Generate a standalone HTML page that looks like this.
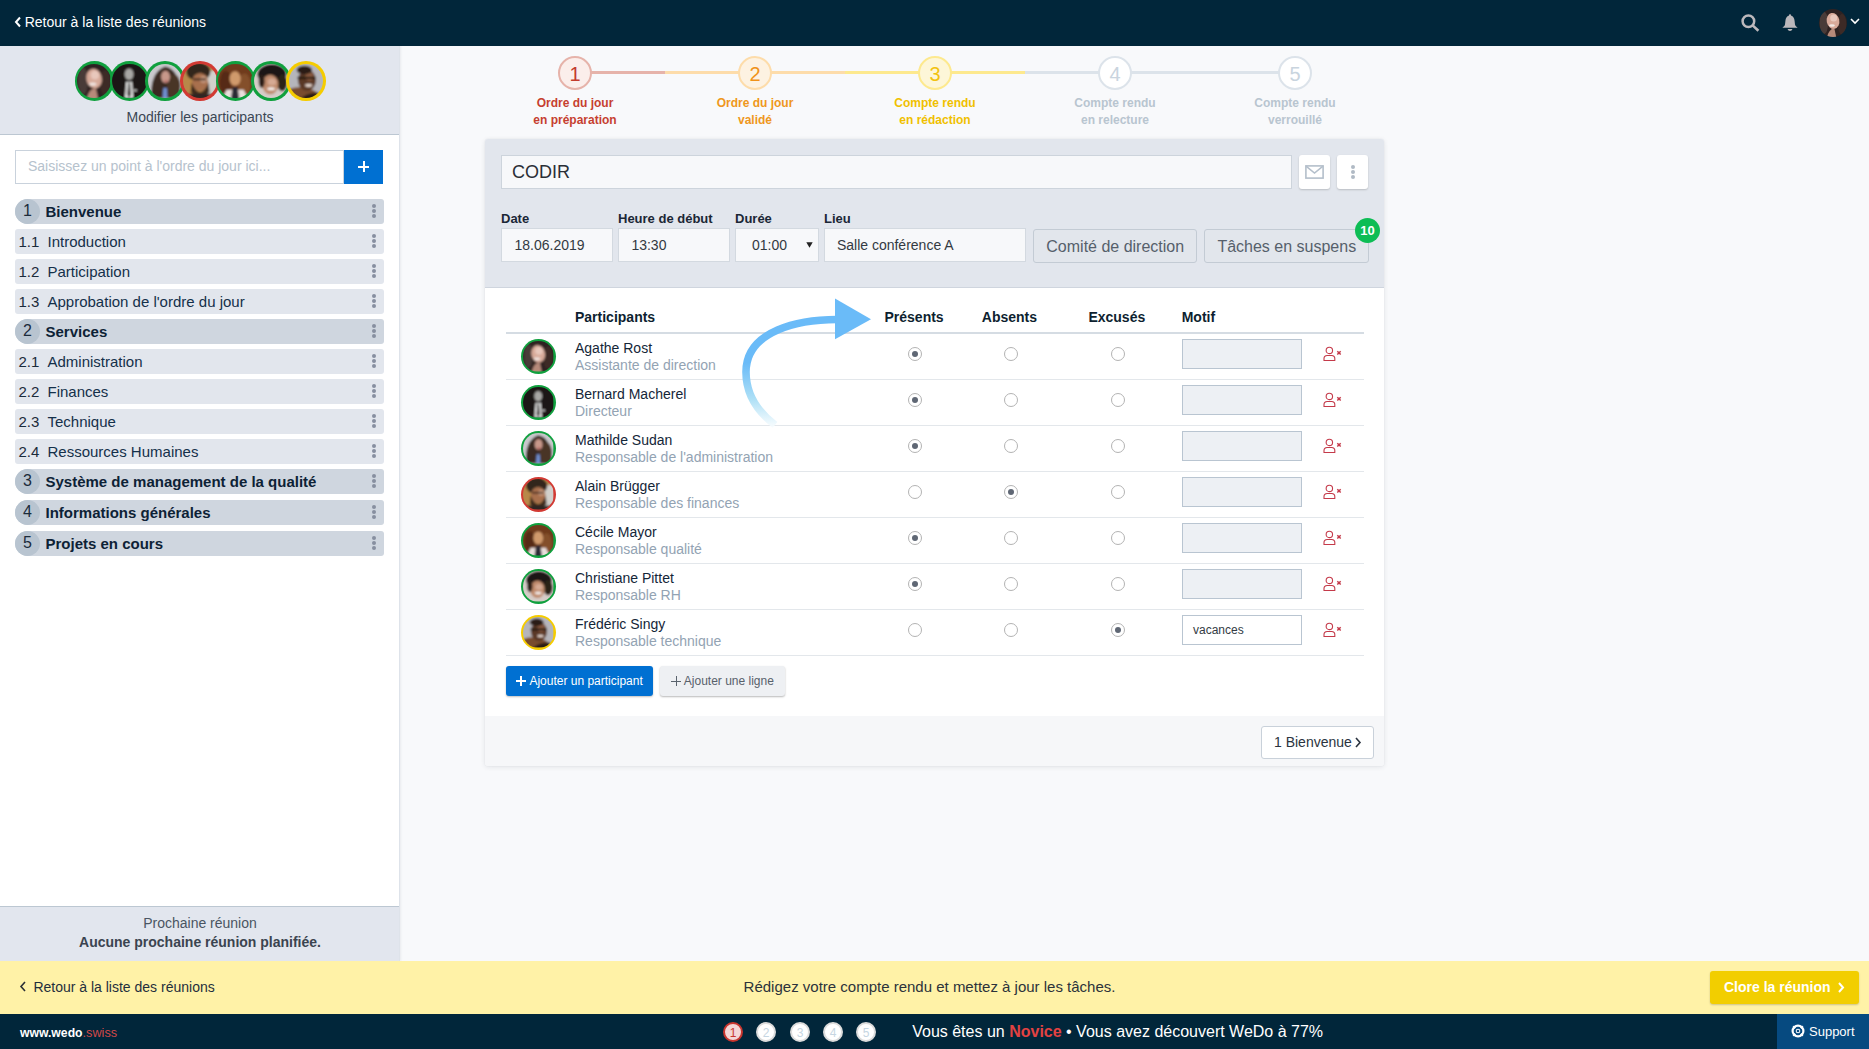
<!DOCTYPE html><html><head><meta charset="utf-8"><style>
html,body{margin:0;padding:0;width:1869px;height:1049px;overflow:hidden;background:#f8f9fb;font-family:"Liberation Sans",sans-serif;}
.t{position:absolute;white-space:pre;}
</style></head><body>
<svg width="0" height="0" style="position:absolute"><defs>
<symbol id="f1" viewBox="0 0 40 40"><g filter="url(#bl)"><rect x="-2" y="-2" width="44" height="44" fill="#2f2320"/><ellipse cx="7" cy="20" rx="6" ry="16" fill="#4a3b38"/><ellipse cx="33" cy="22" rx="6" ry="15" fill="#3c2c28"/><ellipse cx="20" cy="17" rx="9" ry="11.5" transform="rotate(-12 20 17)" fill="#d8aa9a"/><ellipse cx="21" cy="13" rx="5" ry="5" fill="#e8c8bc"/><path d="M11 42 Q14 28 22 28 L25 42Z" fill="#b78a7a"/><ellipse cx="18.5" cy="23.5" rx="4.2" ry="1.8" fill="#f2e8e4"/></g></symbol>
<symbol id="f2" viewBox="0 0 40 40"><g filter="url(#bl)"><rect x="-2" y="-2" width="44" height="44" fill="#1b1412"/><ellipse cx="20" cy="12" rx="5.2" ry="6.8" fill="#a9a7a5"/><path d="M15 40 L16.5 21 L23.5 21 L25 40Z" fill="#e6e6e6"/><path d="M19 22 L21 22 L22 36 L20 40 L18 36Z" fill="#262020"/><rect x="25" y="30" width="4" height="1.6" fill="#ddd"/></g></symbol>
<symbol id="f3" viewBox="0 0 40 40"><g filter="url(#bl)"><rect x="-2" y="-2" width="44" height="44" fill="#c9c8cc"/><path d="M4 40 Q2 10 20 3 Q38 6 38 40Z" fill="#3b2a23"/><ellipse cx="30" cy="26" rx="8" ry="14" fill="#4a3428"/><ellipse cx="20.5" cy="15" rx="5.2" ry="7.2" fill="#c8988a"/><ellipse cx="21" cy="20" rx="1.8" ry="0.8" fill="#b03040"/><path d="M17 40 L18 28 L22 28 L23 40Z" fill="#6f8fd0"/></g></symbol>
<symbol id="f4" viewBox="0 0 40 40"><g filter="url(#bl)"><rect x="-2" y="-2" width="44" height="44" fill="#b88848"/><rect x="27" y="8" width="15" height="34" fill="#d2d0cc"/><ellipse cx="18" cy="9" rx="14" ry="11" fill="#33251c"/><ellipse cx="20" cy="21" rx="9.5" ry="10.5" fill="#a8704e"/><ellipse cx="24" cy="18" rx="4" ry="4" fill="#c89a80"/><rect x="12" y="17" width="15" height="2" fill="#2a1a12"/><path d="M10 22 Q20 44 30 22 L31 33 Q20 44 9 33Z" fill="#3e2a1e"/><rect x="-2" y="35" width="44" height="8" fill="#2e2620"/></g></symbol>
<symbol id="f5" viewBox="0 0 40 40"><g filter="url(#bl)"><rect x="-2" y="-2" width="44" height="44" fill="#6f3b1d"/><ellipse cx="9" cy="22" rx="7" ry="14" fill="#562c14"/><ellipse cx="31" cy="24" rx="7" ry="13" fill="#84502c"/><ellipse cx="20" cy="17" rx="6.5" ry="8.5" fill="#d09a6c"/><path d="M4 42 L10 30 L30 30 L36 42Z" fill="#e9dfdc"/><path d="M15 42 L17 27 L23 27 L25 42Z" fill="#2b2934"/></g></symbol>
<symbol id="f6" viewBox="0 0 40 40"><g filter="url(#bl)"><rect x="-2" y="-2" width="44" height="44" fill="#d6ccc8"/><ellipse cx="21" cy="12" rx="17" ry="12" fill="#1e1612"/><ellipse cx="33" cy="22" rx="6" ry="10" fill="#2c2018"/><ellipse cx="19" cy="24" rx="9.5" ry="11.5" fill="#bf8a6c"/><ellipse cx="21" cy="21" rx="5" ry="4" fill="#d6aa94"/><ellipse cx="20" cy="29" rx="4.5" ry="1.8" fill="#f6f0ee"/><ellipse cx="9" cy="20" rx="3.5" ry="8" fill="#2a1e18"/></g></symbol>
<symbol id="f7" viewBox="0 0 40 40"><g filter="url(#bl)"><rect x="-2" y="-2" width="44" height="44" fill="#b5b5bb"/><path d="M-2 42 L-2 30 Q18 22 34 34 L38 42Z" fill="#784c2e"/><path d="M12 42 Q22 32 36 34 L40 42Z" fill="#2a1c16"/><ellipse cx="21" cy="19" rx="10.5" ry="12.5" fill="#5a3826"/><ellipse cx="24" cy="15" rx="5" ry="5" fill="#8a5a40"/><ellipse cx="18" cy="7" rx="9" ry="5" fill="#2a1a14"/><rect x="10" y="15" width="21" height="2.6" fill="#1a1210"/><ellipse cx="23" cy="25" rx="4.2" ry="1.8" fill="#e4d4cc"/></g></symbol>
<filter id="bl" x="-10%" y="-10%" width="120%" height="120%"><feGaussianBlur stdDeviation="1.1"/></filter></defs></svg>
<div style="position:absolute;left:0px;top:0px;width:1869px;height:46px;box-sizing:border-box;background:#01263a;"></div>
<svg style="position:absolute;left:14px;top:16px" width="8" height="12" viewBox="0 0 8 12"><path d="M6 1.5 L2 6 L6 10.5" stroke="#fff" stroke-width="2" fill="none"/></svg>
<div class="t" style="left:24.7px;top:15.15px;font-size:14px;line-height:14px;font-weight:400;color:#ffffff;">Retour à la liste des réunions</div>
<svg style="position:absolute;left:1740px;top:13px" width="20" height="20" viewBox="0 0 20 20"><circle cx="8.4" cy="8.2" r="5.8" stroke="#bcb8bc" stroke-width="2.5" fill="none"/><path d="M12.6 12.4 L18.4 17.8" stroke="#bcb8bc" stroke-width="2.6"/></svg>
<svg style="position:absolute;left:1782px;top:13px" width="16" height="19" viewBox="0 0 16 19"><path d="M8 1.2 C8.6 1.2 9 1.8 9 2.4 C11.2 3 12.4 5 12.6 8 L13 11.5 C13.2 12.8 14.6 13.8 15.6 14.8 L0.4 14.8 C1.4 13.8 2.8 12.8 3 11.5 L3.4 8 C3.6 5 4.8 3 7 2.4 C7 1.8 7.4 1.2 8 1.2Z" fill="#bbb7bb"/><path d="M5.5 16 L10.5 16 Q9.8 18 8 18 Q6.2 18 5.5 16Z" fill="#bbb7bb"/></svg>
<div style="position:absolute;left:1819.00px;top:9.00px;width:28px;height:28px;border-radius:50%;background:#01263a;z-index:1;"><svg style="position:absolute;left:0px;top:0px;border-radius:50%" width="28" height="28" viewBox="0 0 40 40"><use href="#f1"/></svg></div>
<svg style="position:absolute;left:1850px;top:18px" width="10" height="7" viewBox="0 0 10 7"><path d="M1 1 L5 5 L9 1" stroke="#fff" stroke-width="1.6" fill="none"/></svg>
<div style="position:absolute;left:0px;top:46px;width:400px;height:915px;box-sizing:border-box;background:#ffffff;border-right:1px solid #dee3ea;box-shadow:1px 0 2px rgba(40,50,70,0.07);"></div>
<div style="position:absolute;left:0px;top:46px;width:399px;height:89px;box-sizing:border-box;background:#e2e6ee;border-bottom:1px solid #bcc7d2;"></div>
<div style="position:absolute;left:74.50px;top:61.20px;width:39.6px;height:39.6px;border-radius:50%;background:#10a03e;z-index:1;"><svg style="position:absolute;left:2.7px;top:2.7px;border-radius:50%" width="34.2" height="34.2" viewBox="0 0 40 40"><use href="#f1"/></svg></div>
<div style="position:absolute;left:109.80px;top:61.20px;width:39.6px;height:39.6px;border-radius:50%;background:#10a03e;z-index:2;"><svg style="position:absolute;left:2.7px;top:2.7px;border-radius:50%" width="34.2" height="34.2" viewBox="0 0 40 40"><use href="#f2"/></svg></div>
<div style="position:absolute;left:145.10px;top:61.20px;width:39.6px;height:39.6px;border-radius:50%;background:#10a03e;z-index:3;"><svg style="position:absolute;left:2.7px;top:2.7px;border-radius:50%" width="34.2" height="34.2" viewBox="0 0 40 40"><use href="#f3"/></svg></div>
<div style="position:absolute;left:180.40px;top:61.20px;width:39.6px;height:39.6px;border-radius:50%;background:#d23a33;z-index:4;"><svg style="position:absolute;left:2.7px;top:2.7px;border-radius:50%" width="34.2" height="34.2" viewBox="0 0 40 40"><use href="#f4"/></svg></div>
<div style="position:absolute;left:215.70px;top:61.20px;width:39.6px;height:39.6px;border-radius:50%;background:#10a03e;z-index:5;"><svg style="position:absolute;left:2.7px;top:2.7px;border-radius:50%" width="34.2" height="34.2" viewBox="0 0 40 40"><use href="#f5"/></svg></div>
<div style="position:absolute;left:251.00px;top:61.20px;width:39.6px;height:39.6px;border-radius:50%;background:#10a03e;z-index:6;"><svg style="position:absolute;left:2.7px;top:2.7px;border-radius:50%" width="34.2" height="34.2" viewBox="0 0 40 40"><use href="#f6"/></svg></div>
<div style="position:absolute;left:286.30px;top:61.20px;width:39.6px;height:39.6px;border-radius:50%;background:#f5cc00;z-index:7;"><svg style="position:absolute;left:2.7px;top:2.7px;border-radius:50%" width="34.2" height="34.2" viewBox="0 0 40 40"><use href="#f7"/></svg></div>
<div class="t" style="left:-100px;width:600px;text-align:center;top:110.15px;font-size:14px;line-height:14px;font-weight:400;color:#3b4754;">Modifier les participants</div>
<div style="position:absolute;left:15px;top:150px;width:329px;height:34px;box-sizing:border-box;background:#fff;border:1px solid #c9d2dc;"></div>
<div class="t" style="left:28px;top:159.15px;font-size:14px;line-height:14px;font-weight:400;color:#b6c2cd;">Saisissez un point à l'ordre du jour ici...</div>
<div style="position:absolute;left:344px;top:150px;width:39px;height:34px;box-sizing:border-box;background:#0070d2;"></div>
<div style="position:absolute;left:358px;top:161px;width:11px;height:11px;"><div style="position:absolute;left:4.5px;top:0;width:2px;height:11px;background:#fff"></div><div style="position:absolute;left:0;top:4.5px;width:11px;height:2px;background:#fff"></div></div>
<div style="position:absolute;left:15px;top:199px;width:369px;height:25px;box-sizing:border-box;background:#cfd6df;border-radius:3px 3px 3px 3px;border-top-left-radius:12.5px;border-bottom-left-radius:12.5px;"></div>
<div style="position:absolute;left:15px;top:199px;width:25px;height:25px;box-sizing:border-box;background:#b8c4d0;border-radius:50%;"></div>
<div class="t" style="left:-272.5px;width:600px;text-align:center;top:203.26px;font-size:16px;line-height:16px;font-weight:400;color:#1b2b3b;">1</div>
<div class="t" style="left:45.5px;top:204.30px;font-size:15px;line-height:15px;font-weight:700;color:#0d2236;">Bienvenue</div>
<div style="position:absolute;left:372px;top:204px;width:4px;height:4px;box-sizing:border-box;background:#878fa0;border-radius:50%;"></div>
<div style="position:absolute;left:372px;top:209px;width:4px;height:4px;box-sizing:border-box;background:#878fa0;border-radius:50%;"></div>
<div style="position:absolute;left:372px;top:214px;width:4px;height:4px;box-sizing:border-box;background:#878fa0;border-radius:50%;"></div>
<div style="position:absolute;left:15px;top:229px;width:369px;height:25px;box-sizing:border-box;background:#e2e6ed;border-radius:3px;"></div>
<div class="t" style="left:18.5px;top:234.30px;font-size:15px;line-height:15px;font-weight:400;color:#1b2b3b;">1.1</div>
<div class="t" style="left:47.5px;top:234.30px;font-size:15px;line-height:15px;font-weight:400;color:#14304a;">Introduction</div>
<div style="position:absolute;left:372px;top:234px;width:4px;height:4px;box-sizing:border-box;background:#878fa0;border-radius:50%;"></div>
<div style="position:absolute;left:372px;top:239px;width:4px;height:4px;box-sizing:border-box;background:#878fa0;border-radius:50%;"></div>
<div style="position:absolute;left:372px;top:244px;width:4px;height:4px;box-sizing:border-box;background:#878fa0;border-radius:50%;"></div>
<div style="position:absolute;left:15px;top:259px;width:369px;height:25px;box-sizing:border-box;background:#e2e6ed;border-radius:3px;"></div>
<div class="t" style="left:18.5px;top:264.30px;font-size:15px;line-height:15px;font-weight:400;color:#1b2b3b;">1.2</div>
<div class="t" style="left:47.5px;top:264.30px;font-size:15px;line-height:15px;font-weight:400;color:#14304a;">Participation</div>
<div style="position:absolute;left:372px;top:264px;width:4px;height:4px;box-sizing:border-box;background:#878fa0;border-radius:50%;"></div>
<div style="position:absolute;left:372px;top:269px;width:4px;height:4px;box-sizing:border-box;background:#878fa0;border-radius:50%;"></div>
<div style="position:absolute;left:372px;top:274px;width:4px;height:4px;box-sizing:border-box;background:#878fa0;border-radius:50%;"></div>
<div style="position:absolute;left:15px;top:289px;width:369px;height:25px;box-sizing:border-box;background:#e2e6ed;border-radius:3px;"></div>
<div class="t" style="left:18.5px;top:294.30px;font-size:15px;line-height:15px;font-weight:400;color:#1b2b3b;">1.3</div>
<div class="t" style="left:47.5px;top:294.30px;font-size:15px;line-height:15px;font-weight:400;color:#14304a;">Approbation de l'ordre du jour</div>
<div style="position:absolute;left:372px;top:294px;width:4px;height:4px;box-sizing:border-box;background:#878fa0;border-radius:50%;"></div>
<div style="position:absolute;left:372px;top:299px;width:4px;height:4px;box-sizing:border-box;background:#878fa0;border-radius:50%;"></div>
<div style="position:absolute;left:372px;top:304px;width:4px;height:4px;box-sizing:border-box;background:#878fa0;border-radius:50%;"></div>
<div style="position:absolute;left:15px;top:319px;width:369px;height:25px;box-sizing:border-box;background:#cfd6df;border-radius:3px 3px 3px 3px;border-top-left-radius:12.5px;border-bottom-left-radius:12.5px;"></div>
<div style="position:absolute;left:15px;top:319px;width:25px;height:25px;box-sizing:border-box;background:#b8c4d0;border-radius:50%;"></div>
<div class="t" style="left:-272.5px;width:600px;text-align:center;top:323.26px;font-size:16px;line-height:16px;font-weight:400;color:#1b2b3b;">2</div>
<div class="t" style="left:45.5px;top:324.30px;font-size:15px;line-height:15px;font-weight:700;color:#0d2236;">Services</div>
<div style="position:absolute;left:372px;top:324px;width:4px;height:4px;box-sizing:border-box;background:#878fa0;border-radius:50%;"></div>
<div style="position:absolute;left:372px;top:329px;width:4px;height:4px;box-sizing:border-box;background:#878fa0;border-radius:50%;"></div>
<div style="position:absolute;left:372px;top:334px;width:4px;height:4px;box-sizing:border-box;background:#878fa0;border-radius:50%;"></div>
<div style="position:absolute;left:15px;top:349px;width:369px;height:25px;box-sizing:border-box;background:#e2e6ed;border-radius:3px;"></div>
<div class="t" style="left:18.5px;top:354.30px;font-size:15px;line-height:15px;font-weight:400;color:#1b2b3b;">2.1</div>
<div class="t" style="left:47.5px;top:354.30px;font-size:15px;line-height:15px;font-weight:400;color:#14304a;">Administration</div>
<div style="position:absolute;left:372px;top:354px;width:4px;height:4px;box-sizing:border-box;background:#878fa0;border-radius:50%;"></div>
<div style="position:absolute;left:372px;top:359px;width:4px;height:4px;box-sizing:border-box;background:#878fa0;border-radius:50%;"></div>
<div style="position:absolute;left:372px;top:364px;width:4px;height:4px;box-sizing:border-box;background:#878fa0;border-radius:50%;"></div>
<div style="position:absolute;left:15px;top:379px;width:369px;height:25px;box-sizing:border-box;background:#e2e6ed;border-radius:3px;"></div>
<div class="t" style="left:18.5px;top:384.30px;font-size:15px;line-height:15px;font-weight:400;color:#1b2b3b;">2.2</div>
<div class="t" style="left:47.5px;top:384.30px;font-size:15px;line-height:15px;font-weight:400;color:#14304a;">Finances</div>
<div style="position:absolute;left:372px;top:384px;width:4px;height:4px;box-sizing:border-box;background:#878fa0;border-radius:50%;"></div>
<div style="position:absolute;left:372px;top:389px;width:4px;height:4px;box-sizing:border-box;background:#878fa0;border-radius:50%;"></div>
<div style="position:absolute;left:372px;top:394px;width:4px;height:4px;box-sizing:border-box;background:#878fa0;border-radius:50%;"></div>
<div style="position:absolute;left:15px;top:409px;width:369px;height:25px;box-sizing:border-box;background:#e2e6ed;border-radius:3px;"></div>
<div class="t" style="left:18.5px;top:414.30px;font-size:15px;line-height:15px;font-weight:400;color:#1b2b3b;">2.3</div>
<div class="t" style="left:47.5px;top:414.30px;font-size:15px;line-height:15px;font-weight:400;color:#14304a;">Technique</div>
<div style="position:absolute;left:372px;top:414px;width:4px;height:4px;box-sizing:border-box;background:#878fa0;border-radius:50%;"></div>
<div style="position:absolute;left:372px;top:419px;width:4px;height:4px;box-sizing:border-box;background:#878fa0;border-radius:50%;"></div>
<div style="position:absolute;left:372px;top:424px;width:4px;height:4px;box-sizing:border-box;background:#878fa0;border-radius:50%;"></div>
<div style="position:absolute;left:15px;top:439px;width:369px;height:25px;box-sizing:border-box;background:#e2e6ed;border-radius:3px;"></div>
<div class="t" style="left:18.5px;top:444.30px;font-size:15px;line-height:15px;font-weight:400;color:#1b2b3b;">2.4</div>
<div class="t" style="left:47.5px;top:444.30px;font-size:15px;line-height:15px;font-weight:400;color:#14304a;">Ressources Humaines</div>
<div style="position:absolute;left:372px;top:444px;width:4px;height:4px;box-sizing:border-box;background:#878fa0;border-radius:50%;"></div>
<div style="position:absolute;left:372px;top:449px;width:4px;height:4px;box-sizing:border-box;background:#878fa0;border-radius:50%;"></div>
<div style="position:absolute;left:372px;top:454px;width:4px;height:4px;box-sizing:border-box;background:#878fa0;border-radius:50%;"></div>
<div style="position:absolute;left:15px;top:469px;width:369px;height:25px;box-sizing:border-box;background:#cfd6df;border-radius:3px 3px 3px 3px;border-top-left-radius:12.5px;border-bottom-left-radius:12.5px;"></div>
<div style="position:absolute;left:15px;top:469px;width:25px;height:25px;box-sizing:border-box;background:#b8c4d0;border-radius:50%;"></div>
<div class="t" style="left:-272.5px;width:600px;text-align:center;top:473.26px;font-size:16px;line-height:16px;font-weight:400;color:#1b2b3b;">3</div>
<div class="t" style="left:45.5px;top:474.30px;font-size:15px;line-height:15px;font-weight:700;color:#0d2236;">Système de management de la qualité</div>
<div style="position:absolute;left:372px;top:474px;width:4px;height:4px;box-sizing:border-box;background:#878fa0;border-radius:50%;"></div>
<div style="position:absolute;left:372px;top:479px;width:4px;height:4px;box-sizing:border-box;background:#878fa0;border-radius:50%;"></div>
<div style="position:absolute;left:372px;top:484px;width:4px;height:4px;box-sizing:border-box;background:#878fa0;border-radius:50%;"></div>
<div style="position:absolute;left:15px;top:500px;width:369px;height:25px;box-sizing:border-box;background:#cfd6df;border-radius:3px 3px 3px 3px;border-top-left-radius:12.5px;border-bottom-left-radius:12.5px;"></div>
<div style="position:absolute;left:15px;top:500px;width:25px;height:25px;box-sizing:border-box;background:#b8c4d0;border-radius:50%;"></div>
<div class="t" style="left:-272.5px;width:600px;text-align:center;top:504.26px;font-size:16px;line-height:16px;font-weight:400;color:#1b2b3b;">4</div>
<div class="t" style="left:45.5px;top:505.30px;font-size:15px;line-height:15px;font-weight:700;color:#0d2236;">Informations générales</div>
<div style="position:absolute;left:372px;top:505px;width:4px;height:4px;box-sizing:border-box;background:#878fa0;border-radius:50%;"></div>
<div style="position:absolute;left:372px;top:510px;width:4px;height:4px;box-sizing:border-box;background:#878fa0;border-radius:50%;"></div>
<div style="position:absolute;left:372px;top:515px;width:4px;height:4px;box-sizing:border-box;background:#878fa0;border-radius:50%;"></div>
<div style="position:absolute;left:15px;top:531px;width:369px;height:25px;box-sizing:border-box;background:#cfd6df;border-radius:3px 3px 3px 3px;border-top-left-radius:12.5px;border-bottom-left-radius:12.5px;"></div>
<div style="position:absolute;left:15px;top:531px;width:25px;height:25px;box-sizing:border-box;background:#b8c4d0;border-radius:50%;"></div>
<div class="t" style="left:-272.5px;width:600px;text-align:center;top:535.26px;font-size:16px;line-height:16px;font-weight:400;color:#1b2b3b;">5</div>
<div class="t" style="left:45.5px;top:536.30px;font-size:15px;line-height:15px;font-weight:700;color:#0d2236;">Projets en cours</div>
<div style="position:absolute;left:372px;top:536px;width:4px;height:4px;box-sizing:border-box;background:#878fa0;border-radius:50%;"></div>
<div style="position:absolute;left:372px;top:541px;width:4px;height:4px;box-sizing:border-box;background:#878fa0;border-radius:50%;"></div>
<div style="position:absolute;left:372px;top:546px;width:4px;height:4px;box-sizing:border-box;background:#878fa0;border-radius:50%;"></div>
<div style="position:absolute;left:0px;top:906px;width:399px;height:55px;box-sizing:border-box;background:#e2e6ee;border-top:1px solid #bcc7d2;"></div>
<div class="t" style="left:-100px;width:600px;text-align:center;top:916.35px;font-size:14px;line-height:14px;font-weight:400;color:#4a5562;">Prochaine réunion</div>
<div class="t" style="left:-100px;width:600px;text-align:center;top:935.15px;font-size:14px;line-height:14px;font-weight:700;color:#3b4450;">Aucune prochaine réunion planifiée.</div>
<div style="position:absolute;left:575px;top:71px;width:90px;height:3px;box-sizing:border-box;background:#e6b3aa;"></div>
<div style="position:absolute;left:665px;top:71px;width:180px;height:3px;box-sizing:border-box;background:#fddcaa;"></div>
<div style="position:absolute;left:845px;top:71px;width:180px;height:3px;box-sizing:border-box;background:#fde98e;"></div>
<div style="position:absolute;left:1025px;top:71px;width:180px;height:3px;box-sizing:border-box;background:#dce3ea;"></div>
<div style="position:absolute;left:1205px;top:71px;width:90px;height:3px;box-sizing:border-box;background:#dce3ea;"></div>
<div style="position:absolute;left:558px;top:56px;width:34px;height:34px;box-sizing:border-box;border-radius:50%;border:2px solid #e6b3aa;background:#fbeeeb;"></div>
<div class="t" style="left:275px;width:600px;text-align:center;top:64.07px;font-size:20px;line-height:20px;font-weight:400;color:#c33b2d;">1</div>
<div class="t" style="left:275px;width:600px;text-align:center;top:96.64px;font-size:12px;line-height:12px;font-weight:700;color:#c63f30;">Ordre du jour</div>
<div class="t" style="left:275px;width:600px;text-align:center;top:114.14px;font-size:12px;line-height:12px;font-weight:700;color:#c63f30;">en préparation</div>
<div style="position:absolute;left:738px;top:56px;width:34px;height:34px;box-sizing:border-box;border-radius:50%;border:2px solid #fddcaa;background:#fdf2e2;"></div>
<div class="t" style="left:455px;width:600px;text-align:center;top:64.07px;font-size:20px;line-height:20px;font-weight:400;color:#f0921a;">2</div>
<div class="t" style="left:455px;width:600px;text-align:center;top:96.64px;font-size:12px;line-height:12px;font-weight:700;color:#ef9720;">Ordre du jour</div>
<div class="t" style="left:455px;width:600px;text-align:center;top:114.14px;font-size:12px;line-height:12px;font-weight:700;color:#ef9720;">validé</div>
<div style="position:absolute;left:918px;top:56px;width:34px;height:34px;box-sizing:border-box;border-radius:50%;border:2px solid #fde98e;background:#fdf6d8;"></div>
<div class="t" style="left:635px;width:600px;text-align:center;top:64.07px;font-size:20px;line-height:20px;font-weight:400;color:#f2c20f;">3</div>
<div class="t" style="left:635px;width:600px;text-align:center;top:96.64px;font-size:12px;line-height:12px;font-weight:700;color:#f0c000;">Compte rendu</div>
<div class="t" style="left:635px;width:600px;text-align:center;top:114.14px;font-size:12px;line-height:12px;font-weight:700;color:#f0c000;">en rédaction</div>
<div style="position:absolute;left:1098px;top:56px;width:34px;height:34px;box-sizing:border-box;border-radius:50%;border:2px solid #dce3ea;background:#ffffff;"></div>
<div class="t" style="left:815px;width:600px;text-align:center;top:64.07px;font-size:20px;line-height:20px;font-weight:400;color:#c9d4de;">4</div>
<div class="t" style="left:815px;width:600px;text-align:center;top:96.64px;font-size:12px;line-height:12px;font-weight:700;color:#b8c5d0;">Compte rendu</div>
<div class="t" style="left:815px;width:600px;text-align:center;top:114.14px;font-size:12px;line-height:12px;font-weight:700;color:#b8c5d0;">en relecture</div>
<div style="position:absolute;left:1278px;top:56px;width:34px;height:34px;box-sizing:border-box;border-radius:50%;border:2px solid #dce3ea;background:#ffffff;"></div>
<div class="t" style="left:995px;width:600px;text-align:center;top:64.07px;font-size:20px;line-height:20px;font-weight:400;color:#c9d4de;">5</div>
<div class="t" style="left:995px;width:600px;text-align:center;top:96.64px;font-size:12px;line-height:12px;font-weight:700;color:#b8c5d0;">Compte rendu</div>
<div class="t" style="left:995px;width:600px;text-align:center;top:114.14px;font-size:12px;line-height:12px;font-weight:700;color:#b8c5d0;">verrouillé</div>
<div style="position:absolute;left:485px;top:139px;width:899px;height:627px;box-sizing:border-box;background:#ffffff;border-radius:3px;box-shadow:0 1px 5px rgba(30,40,60,0.10), 0 0 1px rgba(30,40,60,0.15);"></div>
<div style="position:absolute;left:485px;top:139px;width:899px;height:149px;box-sizing:border-box;background:#e2e6ed;border-radius:3px 3px 0 0;border-bottom:1px solid #cfd5de;"></div>
<div style="position:absolute;left:485px;top:716px;width:899px;height:50px;box-sizing:border-box;background:#f6f7f9;border-radius:0 0 3px 3px;"></div>
<div style="position:absolute;left:501px;top:155px;width:791px;height:34px;box-sizing:border-box;background:#f7f8fa;border:1px solid #cdd4dc;"></div>
<div class="t" style="left:512px;top:163.16px;font-size:18px;line-height:18px;font-weight:400;color:#2a2f36;">CODIR</div>
<div style="position:absolute;left:1299px;top:155px;width:31px;height:34px;box-sizing:border-box;background:#fff;border-radius:3px;box-shadow:0 1px 2px rgba(0,0,0,0.18);"></div>
<svg style="position:absolute;left:1305px;top:165px" width="19" height="14" viewBox="0 0 19 14"><rect x="0.9" y="0.9" width="17.2" height="12.2" stroke="#b4bfcb" stroke-width="1.6" fill="none"/><path d="M1 1.2 L9.5 8 L18 1.2" stroke="#b4bfcb" stroke-width="1.6" fill="none"/></svg>
<div style="position:absolute;left:1337px;top:155px;width:31px;height:34px;box-sizing:border-box;background:#fff;border-radius:3px;box-shadow:0 1px 2px rgba(0,0,0,0.18);"></div>
<div style="position:absolute;left:1351px;top:165px;width:4px;height:4px;box-sizing:border-box;background:#b0bac5;border-radius:50%;"></div>
<div style="position:absolute;left:1351px;top:170px;width:4px;height:4px;box-sizing:border-box;background:#b0bac5;border-radius:50%;"></div>
<div style="position:absolute;left:1351px;top:175px;width:4px;height:4px;box-sizing:border-box;background:#b0bac5;border-radius:50%;"></div>
<div class="t" style="left:501px;top:212.00px;font-size:13px;line-height:13px;font-weight:700;color:#1b2736;">Date</div>
<div class="t" style="left:618px;top:212.00px;font-size:13px;line-height:13px;font-weight:700;color:#1b2736;">Heure de début</div>
<div class="t" style="left:735px;top:212.00px;font-size:13px;line-height:13px;font-weight:700;color:#1b2736;">Durée</div>
<div class="t" style="left:824px;top:212.00px;font-size:13px;line-height:13px;font-weight:700;color:#1b2736;">Lieu</div>
<div style="position:absolute;left:501px;top:228px;width:112px;height:34px;box-sizing:border-box;background:#f7f8fa;border:1px solid #d3d9e0;"></div>
<div class="t" style="left:514.5px;top:238.35px;font-size:14px;line-height:14px;font-weight:400;color:#333a42;">18.06.2019</div>
<div style="position:absolute;left:618px;top:228px;width:112px;height:34px;box-sizing:border-box;background:#f7f8fa;border:1px solid #d3d9e0;"></div>
<div class="t" style="left:631.4px;top:238.35px;font-size:14px;line-height:14px;font-weight:400;color:#333a42;">13:30</div>
<div style="position:absolute;left:735px;top:228px;width:84px;height:34px;box-sizing:border-box;background:#f7f8fa;border:1px solid #d3d9e0;"></div>
<div class="t" style="left:752px;top:238.35px;font-size:14px;line-height:14px;font-weight:400;color:#333a42;">01:00</div>
<svg style="position:absolute;left:805.5px;top:241.8px" width="7" height="6" viewBox="0 0 7 6"><path d="M0.3 0.3 L6.7 0.3 L3.5 5.8Z" fill="#222"/></svg>
<div style="position:absolute;left:824px;top:228px;width:202px;height:34px;box-sizing:border-box;background:#f7f8fa;border:1px solid #d3d9e0;"></div>
<div class="t" style="left:836.9px;top:238.35px;font-size:14px;line-height:14px;font-weight:400;color:#333a42;">Salle conférence A</div>
<div style="position:absolute;left:1033px;top:229px;width:164px;height:34px;box-sizing:border-box;background:#e2e6ec;border:1px solid #c3cbd4;border-radius:3px;"></div>
<div class="t" style="left:1046.3px;top:239.06px;font-size:16px;line-height:16px;font-weight:400;color:#56606b;">Comité de direction</div>
<div style="position:absolute;left:1204px;top:229px;width:165px;height:34px;box-sizing:border-box;background:#e2e6ec;border:1px solid #c3cbd4;border-radius:3px;"></div>
<div class="t" style="left:1217.4px;top:239.06px;font-size:16px;line-height:16px;font-weight:400;color:#56606b;">Tâches en suspens</div>
<div style="position:absolute;left:1355px;top:218px;width:25px;height:25px;box-sizing:border-box;background:#0dbd55;border-radius:50%;"></div>
<div class="t" style="left:1067.5px;width:600px;text-align:center;top:224.00px;font-size:13px;line-height:13px;font-weight:700;color:#ffffff;">10</div>
<div class="t" style="left:575px;top:309.85px;font-size:14px;line-height:14px;font-weight:700;color:#0e1f30;">Participants</div>
<div class="t" style="left:884.5px;top:309.85px;font-size:14px;line-height:14px;font-weight:700;color:#0e1f30;">Présents</div>
<div class="t" style="left:981.8px;top:309.85px;font-size:14px;line-height:14px;font-weight:700;color:#0e1f30;">Absents</div>
<div class="t" style="left:1088.4px;top:309.85px;font-size:14px;line-height:14px;font-weight:700;color:#0e1f30;">Excusés</div>
<div class="t" style="left:1181.7px;top:309.85px;font-size:14px;line-height:14px;font-weight:700;color:#0e1f30;">Motif</div>
<div style="position:absolute;left:506px;top:332px;width:858px;height:2px;box-sizing:border-box;background:#d5dce3;"></div>
<div style="position:absolute;left:521.00px;top:338.90px;width:35px;height:35px;border-radius:50%;background:#10a03e;z-index:1;"><svg style="position:absolute;left:2.3px;top:2.3px;border-radius:50%" width="30.4" height="30.4" viewBox="0 0 40 40"><use href="#f1"/></svg></div>
<div class="t" style="left:575px;top:340.85px;font-size:14px;line-height:14px;font-weight:400;color:#142638;">Agathe Rost</div>
<div class="t" style="left:575px;top:357.85px;font-size:14px;line-height:14px;font-weight:400;color:#93a3b3;">Assistante de direction</div>
<div style="position:absolute;left:907.9px;top:346.6px;width:14px;height:14px;box-sizing:border-box;border-radius:50%;border:1px solid #b3b3b3;background:#fff;"></div>
<div style="position:absolute;left:911.9px;top:350.6px;width:6px;height:6px;box-sizing:border-box;border-radius:50%;background:#5f6774;"></div>
<div style="position:absolute;left:1003.9px;top:346.6px;width:14px;height:14px;box-sizing:border-box;border-radius:50%;border:1px solid #b3b3b3;background:#fff;"></div>
<div style="position:absolute;left:1110.7px;top:346.6px;width:14px;height:14px;box-sizing:border-box;border-radius:50%;border:1px solid #b3b3b3;background:#fff;"></div>
<div style="position:absolute;left:1182px;top:339px;width:120px;height:30px;box-sizing:border-box;background:#edf0f4;border:1px solid #b9c5d1;"></div>
<svg style="position:absolute;left:1322px;top:346px" width="21" height="16" viewBox="0 0 21 16"><circle cx="7.35" cy="4.4" r="3.2" stroke="#c43a4a" stroke-width="1.1" fill="none"/><path d="M2 14.5 L2 12.6 Q2 9.6 5.2 9.5 L9.6 9.5 Q12.8 9.6 12.8 12.6 L12.8 14.5Z" stroke="#c43a4a" stroke-width="1.1" fill="none"/><path d="M15.3 5.2 L18.7 8.6 M18.7 5.2 L15.3 8.6" stroke="#c43a4a" stroke-width="1.45"/></svg>
<div style="position:absolute;left:506px;top:379px;width:858px;height:1px;box-sizing:border-box;background:#e3e7eb;"></div>
<div style="position:absolute;left:521.00px;top:384.90px;width:35px;height:35px;border-radius:50%;background:#10a03e;z-index:1;"><svg style="position:absolute;left:2.3px;top:2.3px;border-radius:50%" width="30.4" height="30.4" viewBox="0 0 40 40"><use href="#f2"/></svg></div>
<div class="t" style="left:575px;top:386.85px;font-size:14px;line-height:14px;font-weight:400;color:#142638;">Bernard Macherel</div>
<div class="t" style="left:575px;top:403.85px;font-size:14px;line-height:14px;font-weight:400;color:#93a3b3;">Directeur</div>
<div style="position:absolute;left:907.9px;top:392.6px;width:14px;height:14px;box-sizing:border-box;border-radius:50%;border:1px solid #b3b3b3;background:#fff;"></div>
<div style="position:absolute;left:911.9px;top:396.6px;width:6px;height:6px;box-sizing:border-box;border-radius:50%;background:#5f6774;"></div>
<div style="position:absolute;left:1003.9px;top:392.6px;width:14px;height:14px;box-sizing:border-box;border-radius:50%;border:1px solid #b3b3b3;background:#fff;"></div>
<div style="position:absolute;left:1110.7px;top:392.6px;width:14px;height:14px;box-sizing:border-box;border-radius:50%;border:1px solid #b3b3b3;background:#fff;"></div>
<div style="position:absolute;left:1182px;top:385px;width:120px;height:30px;box-sizing:border-box;background:#edf0f4;border:1px solid #b9c5d1;"></div>
<svg style="position:absolute;left:1322px;top:392px" width="21" height="16" viewBox="0 0 21 16"><circle cx="7.35" cy="4.4" r="3.2" stroke="#c43a4a" stroke-width="1.1" fill="none"/><path d="M2 14.5 L2 12.6 Q2 9.6 5.2 9.5 L9.6 9.5 Q12.8 9.6 12.8 12.6 L12.8 14.5Z" stroke="#c43a4a" stroke-width="1.1" fill="none"/><path d="M15.3 5.2 L18.7 8.6 M18.7 5.2 L15.3 8.6" stroke="#c43a4a" stroke-width="1.45"/></svg>
<div style="position:absolute;left:506px;top:425px;width:858px;height:1px;box-sizing:border-box;background:#e3e7eb;"></div>
<div style="position:absolute;left:521.00px;top:430.90px;width:35px;height:35px;border-radius:50%;background:#10a03e;z-index:1;"><svg style="position:absolute;left:2.3px;top:2.3px;border-radius:50%" width="30.4" height="30.4" viewBox="0 0 40 40"><use href="#f3"/></svg></div>
<div class="t" style="left:575px;top:432.85px;font-size:14px;line-height:14px;font-weight:400;color:#142638;">Mathilde Sudan</div>
<div class="t" style="left:575px;top:449.85px;font-size:14px;line-height:14px;font-weight:400;color:#93a3b3;">Responsable de l'administration</div>
<div style="position:absolute;left:907.9px;top:438.6px;width:14px;height:14px;box-sizing:border-box;border-radius:50%;border:1px solid #b3b3b3;background:#fff;"></div>
<div style="position:absolute;left:911.9px;top:442.6px;width:6px;height:6px;box-sizing:border-box;border-radius:50%;background:#5f6774;"></div>
<div style="position:absolute;left:1003.9px;top:438.6px;width:14px;height:14px;box-sizing:border-box;border-radius:50%;border:1px solid #b3b3b3;background:#fff;"></div>
<div style="position:absolute;left:1110.7px;top:438.6px;width:14px;height:14px;box-sizing:border-box;border-radius:50%;border:1px solid #b3b3b3;background:#fff;"></div>
<div style="position:absolute;left:1182px;top:431px;width:120px;height:30px;box-sizing:border-box;background:#edf0f4;border:1px solid #b9c5d1;"></div>
<svg style="position:absolute;left:1322px;top:438px" width="21" height="16" viewBox="0 0 21 16"><circle cx="7.35" cy="4.4" r="3.2" stroke="#c43a4a" stroke-width="1.1" fill="none"/><path d="M2 14.5 L2 12.6 Q2 9.6 5.2 9.5 L9.6 9.5 Q12.8 9.6 12.8 12.6 L12.8 14.5Z" stroke="#c43a4a" stroke-width="1.1" fill="none"/><path d="M15.3 5.2 L18.7 8.6 M18.7 5.2 L15.3 8.6" stroke="#c43a4a" stroke-width="1.45"/></svg>
<div style="position:absolute;left:506px;top:471px;width:858px;height:1px;box-sizing:border-box;background:#e3e7eb;"></div>
<div style="position:absolute;left:521.00px;top:476.90px;width:35px;height:35px;border-radius:50%;background:#d23a33;z-index:1;"><svg style="position:absolute;left:2.3px;top:2.3px;border-radius:50%" width="30.4" height="30.4" viewBox="0 0 40 40"><use href="#f4"/></svg></div>
<div class="t" style="left:575px;top:478.85px;font-size:14px;line-height:14px;font-weight:400;color:#142638;">Alain Brügger</div>
<div class="t" style="left:575px;top:495.85px;font-size:14px;line-height:14px;font-weight:400;color:#93a3b3;">Responsable des finances</div>
<div style="position:absolute;left:907.9px;top:484.6px;width:14px;height:14px;box-sizing:border-box;border-radius:50%;border:1px solid #b3b3b3;background:#fff;"></div>
<div style="position:absolute;left:1003.9px;top:484.6px;width:14px;height:14px;box-sizing:border-box;border-radius:50%;border:1px solid #b3b3b3;background:#fff;"></div>
<div style="position:absolute;left:1007.9px;top:488.6px;width:6px;height:6px;box-sizing:border-box;border-radius:50%;background:#5f6774;"></div>
<div style="position:absolute;left:1110.7px;top:484.6px;width:14px;height:14px;box-sizing:border-box;border-radius:50%;border:1px solid #b3b3b3;background:#fff;"></div>
<div style="position:absolute;left:1182px;top:477px;width:120px;height:30px;box-sizing:border-box;background:#edf0f4;border:1px solid #b9c5d1;"></div>
<svg style="position:absolute;left:1322px;top:484px" width="21" height="16" viewBox="0 0 21 16"><circle cx="7.35" cy="4.4" r="3.2" stroke="#c43a4a" stroke-width="1.1" fill="none"/><path d="M2 14.5 L2 12.6 Q2 9.6 5.2 9.5 L9.6 9.5 Q12.8 9.6 12.8 12.6 L12.8 14.5Z" stroke="#c43a4a" stroke-width="1.1" fill="none"/><path d="M15.3 5.2 L18.7 8.6 M18.7 5.2 L15.3 8.6" stroke="#c43a4a" stroke-width="1.45"/></svg>
<div style="position:absolute;left:506px;top:517px;width:858px;height:1px;box-sizing:border-box;background:#e3e7eb;"></div>
<div style="position:absolute;left:521.00px;top:522.90px;width:35px;height:35px;border-radius:50%;background:#10a03e;z-index:1;"><svg style="position:absolute;left:2.3px;top:2.3px;border-radius:50%" width="30.4" height="30.4" viewBox="0 0 40 40"><use href="#f5"/></svg></div>
<div class="t" style="left:575px;top:524.85px;font-size:14px;line-height:14px;font-weight:400;color:#142638;">Cécile Mayor</div>
<div class="t" style="left:575px;top:541.85px;font-size:14px;line-height:14px;font-weight:400;color:#93a3b3;">Responsable qualité</div>
<div style="position:absolute;left:907.9px;top:530.6px;width:14px;height:14px;box-sizing:border-box;border-radius:50%;border:1px solid #b3b3b3;background:#fff;"></div>
<div style="position:absolute;left:911.9px;top:534.6px;width:6px;height:6px;box-sizing:border-box;border-radius:50%;background:#5f6774;"></div>
<div style="position:absolute;left:1003.9px;top:530.6px;width:14px;height:14px;box-sizing:border-box;border-radius:50%;border:1px solid #b3b3b3;background:#fff;"></div>
<div style="position:absolute;left:1110.7px;top:530.6px;width:14px;height:14px;box-sizing:border-box;border-radius:50%;border:1px solid #b3b3b3;background:#fff;"></div>
<div style="position:absolute;left:1182px;top:523px;width:120px;height:30px;box-sizing:border-box;background:#edf0f4;border:1px solid #b9c5d1;"></div>
<svg style="position:absolute;left:1322px;top:530px" width="21" height="16" viewBox="0 0 21 16"><circle cx="7.35" cy="4.4" r="3.2" stroke="#c43a4a" stroke-width="1.1" fill="none"/><path d="M2 14.5 L2 12.6 Q2 9.6 5.2 9.5 L9.6 9.5 Q12.8 9.6 12.8 12.6 L12.8 14.5Z" stroke="#c43a4a" stroke-width="1.1" fill="none"/><path d="M15.3 5.2 L18.7 8.6 M18.7 5.2 L15.3 8.6" stroke="#c43a4a" stroke-width="1.45"/></svg>
<div style="position:absolute;left:506px;top:563px;width:858px;height:1px;box-sizing:border-box;background:#e3e7eb;"></div>
<div style="position:absolute;left:521.00px;top:568.90px;width:35px;height:35px;border-radius:50%;background:#10a03e;z-index:1;"><svg style="position:absolute;left:2.3px;top:2.3px;border-radius:50%" width="30.4" height="30.4" viewBox="0 0 40 40"><use href="#f6"/></svg></div>
<div class="t" style="left:575px;top:570.85px;font-size:14px;line-height:14px;font-weight:400;color:#142638;">Christiane Pittet</div>
<div class="t" style="left:575px;top:587.85px;font-size:14px;line-height:14px;font-weight:400;color:#93a3b3;">Responsable RH</div>
<div style="position:absolute;left:907.9px;top:576.6px;width:14px;height:14px;box-sizing:border-box;border-radius:50%;border:1px solid #b3b3b3;background:#fff;"></div>
<div style="position:absolute;left:911.9px;top:580.6px;width:6px;height:6px;box-sizing:border-box;border-radius:50%;background:#5f6774;"></div>
<div style="position:absolute;left:1003.9px;top:576.6px;width:14px;height:14px;box-sizing:border-box;border-radius:50%;border:1px solid #b3b3b3;background:#fff;"></div>
<div style="position:absolute;left:1110.7px;top:576.6px;width:14px;height:14px;box-sizing:border-box;border-radius:50%;border:1px solid #b3b3b3;background:#fff;"></div>
<div style="position:absolute;left:1182px;top:569px;width:120px;height:30px;box-sizing:border-box;background:#edf0f4;border:1px solid #b9c5d1;"></div>
<svg style="position:absolute;left:1322px;top:576px" width="21" height="16" viewBox="0 0 21 16"><circle cx="7.35" cy="4.4" r="3.2" stroke="#c43a4a" stroke-width="1.1" fill="none"/><path d="M2 14.5 L2 12.6 Q2 9.6 5.2 9.5 L9.6 9.5 Q12.8 9.6 12.8 12.6 L12.8 14.5Z" stroke="#c43a4a" stroke-width="1.1" fill="none"/><path d="M15.3 5.2 L18.7 8.6 M18.7 5.2 L15.3 8.6" stroke="#c43a4a" stroke-width="1.45"/></svg>
<div style="position:absolute;left:506px;top:609px;width:858px;height:1px;box-sizing:border-box;background:#e3e7eb;"></div>
<div style="position:absolute;left:521.00px;top:614.90px;width:35px;height:35px;border-radius:50%;background:#f5cc00;z-index:1;"><svg style="position:absolute;left:2.3px;top:2.3px;border-radius:50%" width="30.4" height="30.4" viewBox="0 0 40 40"><use href="#f7"/></svg></div>
<div class="t" style="left:575px;top:616.85px;font-size:14px;line-height:14px;font-weight:400;color:#142638;">Frédéric Singy</div>
<div class="t" style="left:575px;top:633.85px;font-size:14px;line-height:14px;font-weight:400;color:#93a3b3;">Responsable technique</div>
<div style="position:absolute;left:907.9px;top:622.6px;width:14px;height:14px;box-sizing:border-box;border-radius:50%;border:1px solid #b3b3b3;background:#fff;"></div>
<div style="position:absolute;left:1003.9px;top:622.6px;width:14px;height:14px;box-sizing:border-box;border-radius:50%;border:1px solid #b3b3b3;background:#fff;"></div>
<div style="position:absolute;left:1110.7px;top:622.6px;width:14px;height:14px;box-sizing:border-box;border-radius:50%;border:1px solid #b3b3b3;background:#fff;"></div>
<div style="position:absolute;left:1114.7px;top:626.6px;width:6px;height:6px;box-sizing:border-box;border-radius:50%;background:#5f6774;"></div>
<div style="position:absolute;left:1182px;top:615px;width:120px;height:30px;box-sizing:border-box;background:#ffffff;border:1px solid #b9c5d1;"></div>
<div class="t" style="left:1193px;top:623.84px;font-size:12px;line-height:12px;font-weight:400;color:#333b44;">vacances</div>
<svg style="position:absolute;left:1322px;top:622px" width="21" height="16" viewBox="0 0 21 16"><circle cx="7.35" cy="4.4" r="3.2" stroke="#c43a4a" stroke-width="1.1" fill="none"/><path d="M2 14.5 L2 12.6 Q2 9.6 5.2 9.5 L9.6 9.5 Q12.8 9.6 12.8 12.6 L12.8 14.5Z" stroke="#c43a4a" stroke-width="1.1" fill="none"/><path d="M15.3 5.2 L18.7 8.6 M18.7 5.2 L15.3 8.6" stroke="#c43a4a" stroke-width="1.45"/></svg>
<div style="position:absolute;left:506px;top:655px;width:858px;height:1px;box-sizing:border-box;background:#e3e7eb;"></div>
<svg style="position:absolute;left:730px;top:290px" width="150" height="150" viewBox="730 290 150 150">
<defs><linearGradient id="ag" x1="0" y1="290" x2="0" y2="430" gradientUnits="userSpaceOnUse">
<stop offset="0" stop-color="#6abbf8"/><stop offset="0.52" stop-color="#6abbf8"/><stop offset="0.78" stop-color="#aee0f6"/><stop offset="1" stop-color="#ffffff" stop-opacity="0.9"/></linearGradient></defs>
<path d="M837 319.5 C800 319.5 746 330 746 372 C746 395 758 412 775 425" stroke="url(#ag)" stroke-width="7.6" fill="none"/>
<path d="M835 298.6 L871 319.3 L835 339.3Z" fill="#6abbf8"/>
</svg>
<div style="position:absolute;left:506px;top:666px;width:147px;height:30px;box-sizing:border-box;background:#0070d2;border-radius:3px;box-shadow:0 1px 2px rgba(0,0,0,0.25);"></div>
<div style="position:absolute;left:516px;top:676px;width:10px;height:10px;"><div style="position:absolute;left:4px;top:0;width:2px;height:10px;background:#fff"></div><div style="position:absolute;left:0;top:4px;width:10px;height:2px;background:#fff"></div></div>
<div class="t" style="left:529.4px;top:674.84px;font-size:12px;line-height:12px;font-weight:400;color:#ffffff;">Ajouter un participant</div>
<div style="position:absolute;left:660px;top:666px;width:125px;height:30px;box-sizing:border-box;background:#eef0f3;border-radius:3px;box-shadow:0 1px 2px rgba(0,0,0,0.28);"></div>
<div style="position:absolute;left:671px;top:676px;width:10px;height:10px;"><div style="position:absolute;left:4.5px;top:0;width:1px;height:10px;background:#5a636d"></div><div style="position:absolute;left:0;top:4.5px;width:10px;height:1px;background:#5a636d"></div></div>
<div class="t" style="left:683.8px;top:674.84px;font-size:12px;line-height:12px;font-weight:400;color:#58616b;">Ajouter une ligne</div>
<div style="position:absolute;left:1261px;top:726px;width:113px;height:33px;box-sizing:border-box;background:#fff;border:1px solid #c9d1da;border-radius:3px;"></div>
<div class="t" style="left:1274px;top:735.15px;font-size:14px;line-height:14px;font-weight:400;color:#2b3440;">1 Bienvenue</div>
<svg style="position:absolute;left:1354px;top:737px" width="8" height="11" viewBox="0 0 8 11"><path d="M2 1 L6 5.5 L2 10" stroke="#2b3440" stroke-width="1.6" fill="none"/></svg>
<div style="position:absolute;left:0px;top:961px;width:1869px;height:53px;box-sizing:border-box;background:#fff2a7;"></div>
<svg style="position:absolute;left:19px;top:981px" width="8" height="11" viewBox="0 0 8 11"><path d="M6 1 L2 5.5 L6 10" stroke="#2a2f35" stroke-width="1.6" fill="none"/></svg>
<div class="t" style="left:33.4px;top:979.95px;font-size:14px;line-height:14px;font-weight:400;color:#1f2f3d;">Retour à la liste des réunions</div>
<div class="t" style="left:743.6px;top:979.30px;font-size:15px;line-height:15px;font-weight:400;color:#2c333b;">Rédigez votre compte rendu et mettez à jour les tâches.</div>
<div style="position:absolute;left:1710px;top:971px;width:149px;height:33px;box-sizing:border-box;background:#f2ce00;border-radius:3px;box-shadow:0 1px 2px rgba(0,0,0,0.2);"></div>
<div class="t" style="left:1724px;top:980.15px;font-size:14px;line-height:14px;font-weight:700;color:#ffffff;">Clore la réunion</div>
<svg style="position:absolute;left:1837px;top:982px" width="8" height="11" viewBox="0 0 8 11"><path d="M2 1 L6 5.5 L2 10" stroke="#fff" stroke-width="2" fill="none"/></svg>
<div style="position:absolute;left:0px;top:1014px;width:1869px;height:35px;box-sizing:border-box;background:#01263a;"></div>
<div class="t" style="left:20px;top:1025.7px;font-size:12.2px;line-height:15px;"><b style="color:#fff">www.wedo</b><span style="color:#d24848;font-size:12.7px">.swiss</span></div>
<div style="position:absolute;left:723px;top:1022px;width:20px;height:20px;box-sizing:border-box;border-radius:50%;border:2.5px solid #c8352e;background:#f4d6d6;"></div>
<div class="t" style="left:433px;width:600px;text-align:center;top:1026.84px;font-size:12px;line-height:12px;font-weight:400;color:#c8352e;">1</div>
<div style="position:absolute;left:756px;top:1022px;width:20px;height:20px;box-sizing:border-box;border-radius:50%;border:2.5px solid #dcdcdc;background:#fff;"></div>
<div class="t" style="left:466px;width:600px;text-align:center;top:1026.84px;font-size:12px;line-height:12px;font-weight:400;color:#c6d6e2;">2</div>
<div style="position:absolute;left:790px;top:1022px;width:20px;height:20px;box-sizing:border-box;border-radius:50%;border:2.5px solid #dcdcdc;background:#fff;"></div>
<div class="t" style="left:500px;width:600px;text-align:center;top:1026.84px;font-size:12px;line-height:12px;font-weight:400;color:#c6d6e2;">3</div>
<div style="position:absolute;left:823px;top:1022px;width:20px;height:20px;box-sizing:border-box;border-radius:50%;border:2.5px solid #dcdcdc;background:#fff;"></div>
<div class="t" style="left:533px;width:600px;text-align:center;top:1026.84px;font-size:12px;line-height:12px;font-weight:400;color:#c6d6e2;">4</div>
<div style="position:absolute;left:856px;top:1022px;width:20px;height:20px;box-sizing:border-box;border-radius:50%;border:2.5px solid #dcdcdc;background:#fff;"></div>
<div class="t" style="left:566px;width:600px;text-align:center;top:1026.84px;font-size:12px;line-height:12px;font-weight:400;color:#c6d6e2;">5</div>
<div class="t" style="left:912.2px;top:1023px;font-size:16px;line-height:18px;color:#fff">Vous êtes un <b style="color:#e24242">Novice</b> • Vous avez découvert WeDo à 77%</div>
<div style="position:absolute;left:1777px;top:1014px;width:92px;height:35px;box-sizing:border-box;background:#064a80;"></div>
<svg style="position:absolute;left:1791px;top:1024px" width="14" height="14" viewBox="0 0 14 14"><circle cx="7" cy="7" r="6.5" fill="#fff"/><circle cx="7" cy="7" r="4.3" fill="#064a80"/><circle cx="7" cy="7" r="2.3" fill="#fff"/><circle cx="7" cy="7" r="1.3" fill="#064a80"/><path d="M4.2 4.2 L2.2 2.2 M9.8 4.2 L11.8 2.2 M4.2 9.8 L2.2 11.8 M9.8 9.8 L11.8 11.8" stroke="#fff" stroke-width="2.2"/></svg>
<div class="t" style="left:1809px;top:1025.00px;font-size:13px;line-height:13px;font-weight:400;color:#ffffff;">Support</div>
</body></html>
